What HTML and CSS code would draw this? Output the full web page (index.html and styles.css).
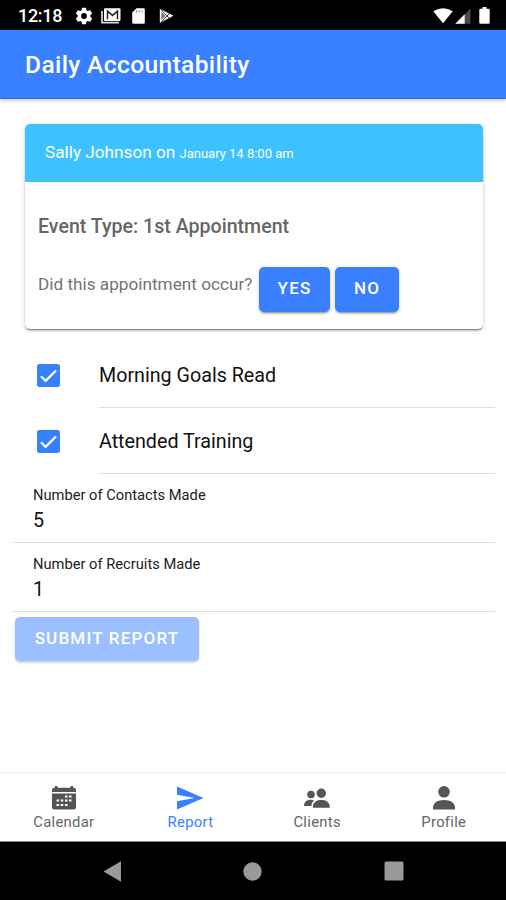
FILE: index.html
```html
<!DOCTYPE html>
<html lang="en">
<head>
<meta charset="utf-8">
<title>Daily Accountability</title>
<link rel="stylesheet" href="styles.css">
</head>
<body>
<div class="status">
  <span class="clock">12:18</span>
  <svg class="gear" width="20" height="20" viewBox="0 0 24 24" fill="#fff"><path d="M19.43 12.98c.04-.32.07-.64.07-.98s-.03-.66-.07-.98l2.11-1.65c.19-.15.24-.42.12-.64l-2-3.46c-.12-.22-.39-.3-.61-.22l-2.49 1c-.52-.4-1.08-.73-1.69-.98l-.38-2.65A.49.49 0 0 0 14 2h-4c-.25 0-.46.18-.49.42l-.38 2.65c-.61.25-1.17.59-1.69.98l-2.49-1c-.23-.09-.49 0-.61.22l-2 3.46c-.13.22-.07.49.12.64l2.11 1.65c-.04.32-.07.65-.07.98s.03.66.07.98l-2.11 1.65c-.19.15-.24.42-.12.64l2 3.46c.12.22.39.3.61.22l2.49-1c.52.4 1.08.73 1.69.98l.38 2.65c.03.24.24.42.49.42h4c.25 0 .46-.18.49-.42l.38-2.65c.61-.25 1.17-.59 1.69-.98l2.49 1c.23.09.49 0 .61-.22l2-3.46c.12-.22.07-.49-.12-.64l-2.11-1.65zM12 15.500a3.500 3.500 0 1 1 0-7 3.500 3.500 0 0 1 0 7z"/></svg>
  <svg class="mail" width="20" height="16" viewBox="0 0 20 16"><path d="M1 3v11.700h17" fill="none" stroke="#ddd" stroke-width="1.700"/><rect x="3" y=".3" width="16.500" height="12.700" rx="1" fill="#fff"/><path d="M6.500 11.200V3.200l5 4.200 5-4.200v8" fill="none" stroke="#222" stroke-width="1.500"/></svg>
  <svg class="sd" width="13" height="16" viewBox="0 0 13 16"><path d="M4.500.3H11.600q1.200 0 1.200 1.200v13q0 1.200-1.200 1.200H1.400Q.2 15.700.2 14.500V4.600z" fill="#fff"/><path d="M4.500 2.200v2.500M7.200 2.200v2.500M9.900 2.200v2.500" stroke="#888" stroke-width=".9"/></svg>
  <svg class="play" width="15" height="16" viewBox="0 0 15 16"><path d="M.8.800 14.400 7.800.8 15z" fill="#fff"/><path d="m2 1.500 8.500 9M2 14.400l8.500-9" stroke="#333" stroke-width="1"/><path d="M2.300 3.600v8.600L6.500 8z" fill="#777"/></svg>
  <svg class="wifi" width="20" height="16" viewBox="0 0 20 16"><path d="M.3 3.300Q10-3 19.700 3.300L10 15.300z" fill="#fff"/></svg>
  <svg class="signal" width="16" height="16" viewBox="0 0 16 16"><path d="M.3 15.700 15.500.5v15.200z" fill="#4b4b4b"/><path d="M.3 15.700 9.700 6.300v9.400z" fill="#fff"/></svg>
  <svg class="battery" width="11" height="17" viewBox="0 0 11 17"><path d="M3.500 0h4v1.700h2q1.200 0 1.200 1.200v12.600q0 1.200-1.200 1.200h-8Q.3 16.700.3 15.500V2.900q0-1.200 1.200-1.200h2z" fill="#fff"/></svg>
</div>
<header class="toolbar"><h1>Daily Accountability</h1></header>
<main>
  <section class="card">
    <div class="card-head"><span class="who">Sally Johnson on</span><span class="when">January 14 8:00 am</span></div>
    <h2>Event Type: 1st Appointment</h2>
    <div class="question"><span class="ask">Did this appointment occur?</span><button class="btn yes">YES</button><button class="btn no">NO</button></div>
  </section>
  <div class="check">
    <svg width="23" height="23" viewBox="0 0 23 23"><rect width="23" height="23" rx="2.500" fill="#3880ff"/><path d="m4 12.300 4.600 4.600L19 6.500" fill="none" stroke="#fff" stroke-width="2.300"/></svg>
    <span class="label">Morning Goals Read</span>
  </div>
  <div class="check second">
    <svg width="23" height="23" viewBox="0 0 23 23"><rect width="23" height="23" rx="2.500" fill="#3880ff"/><path d="m4 12.300 4.600 4.600L19 6.500" fill="none" stroke="#fff" stroke-width="2.300"/></svg>
    <span class="label">Attended Training</span>
  </div>
  <div class="field"><span class="name">Number of Contacts Made</span><span class="value">5</span></div>
  <div class="field"><span class="name">Number of Recruits Made</span><span class="value">1</span></div>
  <button class="btn submit">SUBMIT REPORT</button>
</main>
<nav class="tabs">
  <a class="tab"><svg width="26" height="26" viewBox="0 0 26 26"><path d="M1 7V5Q1 2.800 3.200 2.800H4V1h2.500v1.800h13V1H22v1.800h.800Q25 2.800 25 5v2zM1 8.500h24V22q0 2.500-2.500 2.500h-19Q1 24.500 1 22z" fill="#555"/><path d="M14 10.500h2.500v2H14zM18 10.500h2.500v2H18zM5.500 14.500H8v2H5.500zM9.700 14.500h2.500v2H9.700zM14 14.500h2.500v2H14zM18 14.500h2.500v2H18zM5.500 19H8v2H5.500zM9.700 19h2.500v2H9.700zM14 19h2.500v2H14z" fill="#fff"/></svg><span>Calendar</span></a>
  <a class="tab active"><svg width="28" height="26" viewBox="0 0 28 26"><path d="M1 1.500 27.500 13 1 24.500v-8.300L18.500 13 1 9.800z" fill="#3880ff"/></svg><span>Report</span></a>
  <a class="tab"><svg width="28" height="26" viewBox="0 0 28 26" fill="#555"><circle cx="8" cy="9.500" r="3.800"/><path d="M1 21c0-4 2.500-6.300 6.500-6.300 1.500 0 2.600.200 3.700.800-1.700 1.300-2.700 3.200-2.800 5.500z"/><circle cx="18.300" cy="8.300" r="4.700"/><path d="M9.800 22.700c0-5 3-7.600 8.500-7.600s8.500 2.600 8.500 7.600z"/></svg><span>Clients</span></a>
  <a class="tab"><svg width="26" height="26" viewBox="0 0 26 26" fill="#555"><circle cx="13" cy="6.800" r="5.800"/><path d="M2 24.500v-1.800c0-4.800 4.200-7.700 11-7.700s11 2.900 11 7.700v1.800z"/></svg><span>Profile</span></a>
</nav>
<div class="navbar">
  <svg width="18" height="21" viewBox="0 0 18 21"><path d="M.5 10.500 18 .3v20.400z" fill="#999"/></svg>
  <svg width="19" height="19" viewBox="0 0 19 19"><circle cx="9.500" cy="9.500" r="9.200" fill="#999"/></svg>
  <svg width="20" height="20" viewBox="0 0 20 20"><rect x=".5" y=".5" width="19" height="19" rx="1.500" fill="#999"/></svg>
</div>
</body>
</html>
```
FILE: styles.css
```css
* { box-sizing: border-box; }
body {
  margin: 0;
  width: 506px;
  height: 900px;
  display: flex;
  flex-direction: column;
  background: #fff;
  color: #111;
  font-family: Roboto, "Liberation Sans", sans-serif;
  overflow: hidden;
  white-space: nowrap;
}
svg { display: block; flex: none; }
h1, h2 { margin: 0; font-weight: 500; }
.status {
  height: 30px;
  flex: none;
  background: #000;
  color: #fff;
  display: flex;
  align-items: center;
  padding: 1px 16px 0 18px;
}
.clock { font-size: 18px; font-weight: 500; width: 56px; letter-spacing: -.3px; }
.mail { margin-left: 7px; }
.sd { margin-left: 11px; }
.play { margin-left: 14px; }
.wifi { margin-left: auto; }
.signal { margin-left: 2px; }
.battery { margin-left: 8px; }
.toolbar {
  height: 69px;
  flex: none;
  background: #3880ff;
  border-bottom: 1px solid #1f74e8;
  box-shadow: 0 2px 4px rgba(0, 0, 0, .2);
  padding: 2px 25px 0;
  display: flex;
  align-items: center;
}
h1 { font-size: 24.600px; line-height: 30px; color: #fff; letter-spacing: .35px; }
main { flex: 1; display: flex; flex-direction: column; padding: 25px 0 0; }
.card {
  height: 205px;
  margin: 0 23px 0 25px;
  border-radius: 5px;
  overflow: hidden;
  box-shadow: 0 3px 1px -2px rgba(0, 0, 0, .3), 0 2px 2px rgba(0, 0, 0, .18), 0 1px 5px rgba(0, 0, 0, .15);
}
.card-head {
  height: 58px;
  background: #3dc2ff;
  color: #fff;
  padding: 16px 0 0 20px;
  line-height: 24px;
}
.who { font-size: 17.200px; display: inline-block; width: 134.500px; }
.when { font-size: 13px; }
h2 { font-size: 19.600px; line-height: 24px; margin: 33px 0 0 13px; color: #666; }
.question { display: flex; margin: 28px 0 0 13px; }
.ask { font-size: 17.200px; line-height: 34px; width: 221px; color: #737373; }
.btn {
  font: 500 17px/43px Roboto, sans-serif;
  height: 45px;
  padding: 0 0 2px;
  border: 0;
  border-radius: 5px;
  color: #fff;
  background: #3880ff;
  letter-spacing: 1.200px;
  box-shadow: 0 3px 1px -2px rgba(0, 0, 0, .2), 0 2px 2px rgba(0, 0, 0, .14), 0 1px 4px rgba(0, 0, 0, .14);
}
.yes { width: 71px; margin-right: 5px; }
.no { width: 64px; }
.check { height: 66px; margin: 13px 0 0 37px; display: flex; align-items: center; }
.check.second { margin-top: 0; }
.label {
  margin-left: 39px;
  width: 396px;
  height: 100%;
  line-height: 68px;
  font-size: 19.700px;
  border-bottom: 1px solid #dedede;
}
.field {
  height: 69px;
  margin: 0 11px 0 13px;
  padding: 10px 0 0 20px;
  border-bottom: 1px solid #dedede;
  display: flex;
  flex-direction: column;
}
.name { font-size: 14.700px; line-height: 22px; color: #222; }
.value { font-size: 19.700px; line-height: 29px; }
.submit {
  width: 184px;
  height: 44px;
  margin: 5px 0 0 15px;
  background: #9bbfff;
  box-shadow: 0 2px 2px rgba(0, 0, 0, .12), 0 1px 3px rgba(0, 0, 0, .1);
}
.tabs {
  height: 70px;
  flex: none;
  border-top: 1px solid #eee;
  border-bottom: 1px solid #888;
  display: grid;
  grid-template-columns: repeat(4, 126.670px);
}
.tab {
  display: flex;
  flex-direction: column;
  align-items: center;
  padding: 12px 0 0 1px;
  font-size: 14.800px;
  line-height: 22px;
  letter-spacing: .3px;
  color: #666;
}
.tab:first-child svg, .tab:last-child svg { margin-left: 1px; }
.active { color: #3880ff; }
.navbar {
  height: 58px;
  flex: none;
  background: #000;
  display: flex;
  align-items: center;
  gap: 122px;
  padding-left: 103px;
}
```
